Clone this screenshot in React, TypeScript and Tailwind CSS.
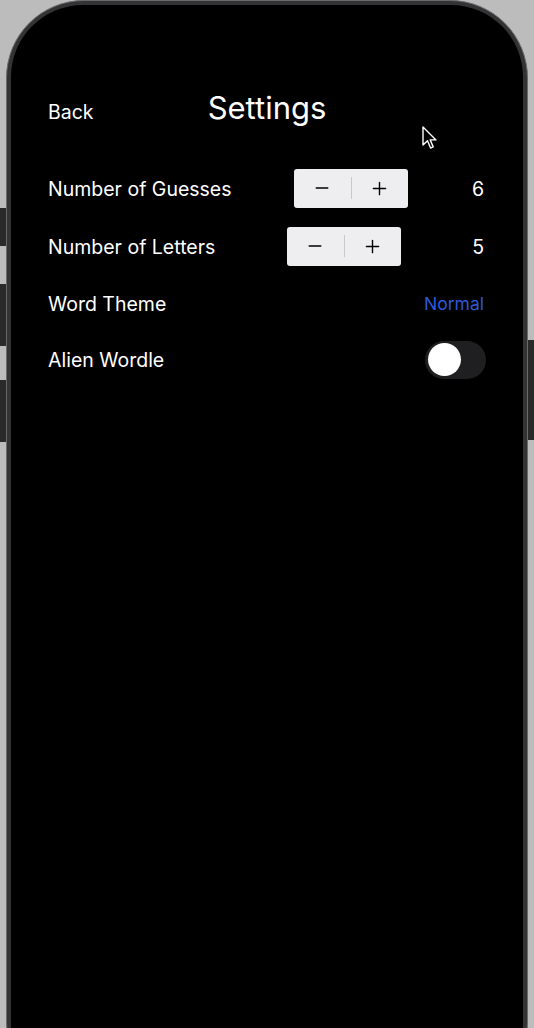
import { Minus, Plus } from "lucide-react";

function Stepper({ className }: { className: string }) {
  return (
    <div className={`flex h-[39px] w-[114px] items-center rounded-[3px] bg-[#eeeef0] ${className}`}>
      <div className="flex flex-1 items-center justify-center text-black">
        <Minus size={20} strokeWidth={1.6} />
      </div>
      <div className="h-[22px] w-px bg-[#c9c9cc]" />
      <div className="flex flex-1 items-center justify-center text-black">
        <Plus size={21} strokeWidth={1.6} />
      </div>
    </div>
  );
}

export default function App() {
  return (
    <div
      className="relative h-[1028px] w-[534px] overflow-hidden bg-[#bcbcbc] px-[6px]"
      style={{ fontFamily: "Inter, 'Noto Sans', sans-serif" }}
    >
      {/* side buttons */}
      <div className="absolute left-0 top-[208px] h-[38px] w-[6px] bg-[#2a2a2a]" />
      <div className="absolute left-0 top-[284px] h-[62px] w-[6px] bg-[#2a2a2a]" />
      <div className="absolute left-0 top-[380px] h-[62px] w-[6px] bg-[#2a2a2a]" />
      <div className="absolute right-0 top-[340px] h-[100px] w-[6px] bg-[#2a2a2a]" />

      {/* phone */}
      <div className="h-[1100px] rounded-[78px] border border-[#6a6a6a] bg-[#333335] p-[4px]">
        <div className="h-full rounded-[72px] bg-black pl-[37px] pr-[39px] pt-[80px] text-white">
          <div className="grid grid-cols-[1fr_auto_1fr] items-start">
            <span className="mt-[13px] text-[19.5px]">Back</span>
            <span className="translate-x-[1px] text-[31px]">Settings</span>
            <span />
          </div>

          <div className="mt-[37px] flex flex-col">
            <div className="flex h-[39px] items-center">
              <span className="pt-[4px] text-[19.5px]">Number of Guesses</span>
              <div className="flex-1" />
              <Stepper className="mr-[64px]" />
              <span className="w-[12px] pt-[4px] text-right text-[19.5px]">6</span>
            </div>
            <div className="mt-[19px] flex h-[39px] items-center">
              <span className="pt-[4px] text-[19.5px]">Number of Letters</span>
              <div className="flex-1" />
              <Stepper className="mr-[71px]" />
              <span className="w-[12px] pt-[4px] text-right text-[19.5px]">5</span>
            </div>
            <div className="mt-[18px] flex h-[38px] items-center">
              <span className="pt-[4px] text-[19.5px]">Word Theme</span>
              <div className="flex-1" />
              <span className="pt-[4px] text-[17.5px] text-[#2f58d8]">Normal</span>
            </div>
            <div className="mt-[19px] flex h-[38px] items-center">
              <span className="pt-[2px] text-[19.5px]">Alien Wordle</span>
              <div className="flex-1" />
              <div className="-mr-[2px] flex h-[38px] w-[61px] items-center rounded-full bg-[#1f1f21] px-[3px]">
                <div className="h-[33px] w-[33px] rounded-full bg-white" />
              </div>
            </div>
          </div>
        </div>
      </div>

      {/* mouse pointer */}
      <svg className="absolute left-[422px] top-[126px]" width="16" height="24" viewBox="0 0 16 24">
        <path d="M1 1 L1 19 L5.5 14.8 L8.6 22 L11.2 20.9 L8.2 13.9 L14 13.9 Z" fill="black" stroke="white" strokeWidth="1.4" strokeLinejoin="round" />
      </svg>
    </div>
  );
}
